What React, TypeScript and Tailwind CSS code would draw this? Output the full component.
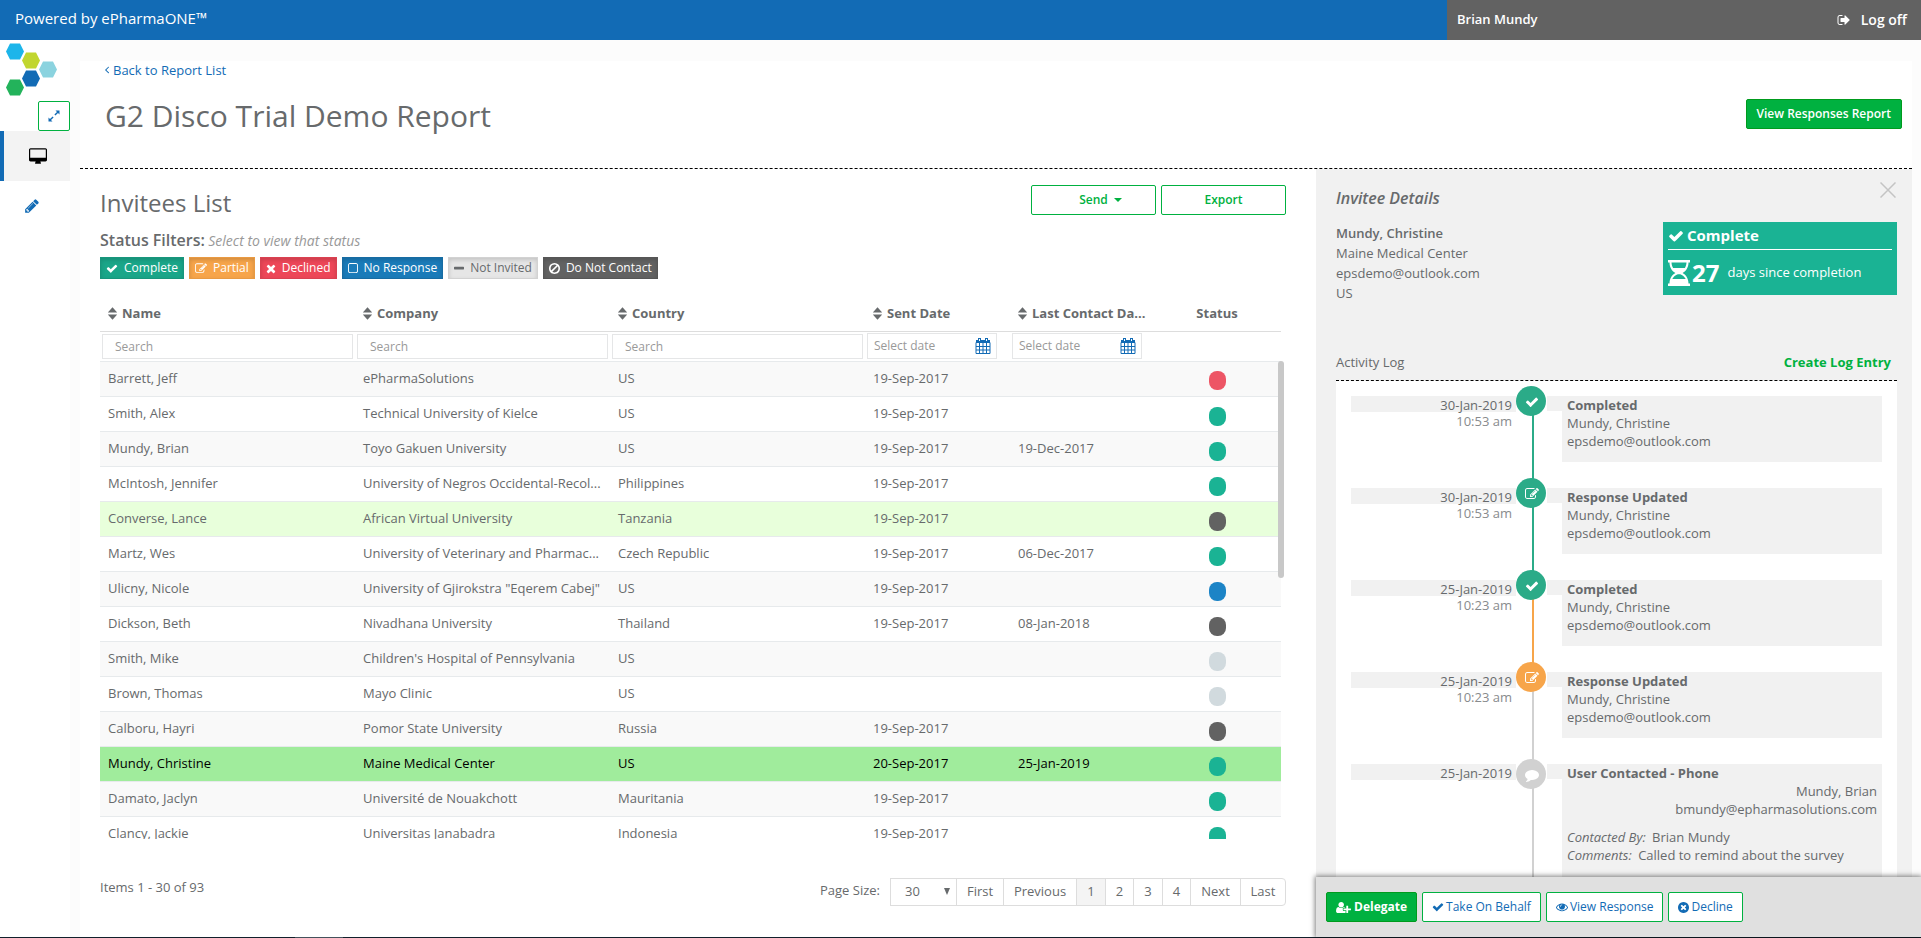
import React from "react";

const ICONS = {
  check: { box: "0 0 1792 1792", d: "M1671 566q0 40-28 68l-724 724-136 136q-28 28-68 28t-68-28l-136-136-362-362q-28-28-28-68t28-68l136-136q28-28 68-28t68 28l294 295 656-657q28-28 68-28t68 28l136 136q28 28 28 68z" },
  times: { box: "192 0 1408 1792", d: "M1490 1322q0 40-28 68l-136 136q-28 28-68 28t-68-28l-294-294-294 294q-28 28-68 28t-68-28l-136-136q-28-28-28-68t28-68l294-294-294-294q-28-28-28-68t28-68l136-136q28-28 68-28t68 28l294 294 294-294q28-28 68-28t68 28l136 136q28 28 28 68t-28 68l-294 294 294 294q28 28 28 68z" },
  minus: { box: "192 0 1408 1792", d: "M1600 736v192q0 40-28 68t-68 28h-1216q-40 0-68-28t-28-68v-192q0-40 28-68t68-28h1216q40 0 68 28t28 68z" },
  square: { box: "192 0 1408 1792", d: "M1312 256h-832q-66 0-113 47t-47 113v832q0 66 47 113t113 47h832q66 0 113-47t47-113v-832q0-66-47-113t-113-47zm288 160v832q0 119-84.5 203.5t-203.5 84.5h-832q-119 0-203.5-84.5t-84.5-203.5v-832q0-119 84.5-203.5t203.5-84.5h832q119 0 203.5 84.5t84.5 203.5z" },
  ban: { box: "128 0 1536 1792", d: "M1440 893q0-161-87-295l-754 753q137 89 297 89 111 0 211.5-43.5t173.5-116.5 116-174.5 43-212.5zm-999 299l755-754q-135-91-300-91-148 0-273 73t-198 199-73 274q0 162 89 299zm1223-299q0 157-61 300t-163.5 246-245 164-298.5 61-298.5-61-245-164-163.5-246-61-300 61-299.5 163.5-245.5 245-164 298.5-61 298.5 61 245 164 163.5 245.5 61 299.5z" },
  edit: { box: "0 0 1792 1792", d: "M888 1184l116-116-152-152-116 116v56h96v96h56zm440-720q-16-16-33 1l-350 350q-17 17-1 33t33-1l350-350q17-17 1-33zm80 594v190q0 119-84.5 203.5t-203.5 84.5h-832q-119 0-203.5-84.5t-84.5-203.5v-832q0-119 84.5-203.5t203.5-84.5h832q63 0 117 25 15 7 18 23 3 17-9 29l-49 49q-14 14-32 8-23-6-45-6h-832q-66 0-113 47t-47 113v832q0 66 47 113t113 47h832q66 0 113-47t47-113v-126q0-13 9-22l64-64q15-15 35-7t20 29zm-96-738l288 288-672 672h-288v-288zm444 132l-92 92-288-288 92-92q28-28 68-28t68 28l152 152q28 28 28 68t-28 68z" },
  desktop: { box: "0 -64 1920 1792", d: "M1792 992v-832q0-13-9.500-22.500t-22.500-9.500h-1600q-13 0-22.500 9.500t-9.500 22.500v832q0 13 9.500 22.500t22.500 9.500h1600q13 0 22.500-9.500t9.500-22.500zm128-832v1088q0 66-47 113t-113 47h-544q0 37 16 77.500t32 71 16 43.500q0 26-19 45t-45 19h-512q-26 0-45-19t-19-45q0-14 16-44t32-70 16-78h-544q-66 0-113-47t-47-113v-1088q0-66 47-113t113-47h1600q66 0 113 47t47 113z" },
  pencil: { box: "0 0 1792 1792", d: "M491 1536l91-91-235-235-91 91v107h128v128h107zm523-928q0-22-22-22-10 0-17 7l-542 542q-7 7-7 17 0 22 22 22 10 0 17-7l542-542q7-7 7-17zm-54-192l416 416-832 832h-416v-416zm683 96q0 53-37 90l-166 166-416-416 166-165q36-38 90-38 53 0 91 38l235 234q37 39 37 91z" },
  comment: { box: "0 0 1792 1792", d: "M1792 896q0 174-120 321.500t-326 233-450 85.500q-70 0-145-8-198 175-460 242-49 14-114 22-17 2-30.500-9t-17.500-29v-1q-3-4-.5-12t2-10 4.500-9.500l6-9 7-8.500 8-9q7-8 31-34.500t34.500-38 31-39.500 32.500-51 27-59 26-76q-157-89-247.500-220t-90.500-281q0-130 71-248.500t191-204.500 286-136.500 348-50.500q244 0 450 85.500t326 233 120 321.500z" },
  signOut: { box: "0 0 1792 1792", d: "M704 1440q0 4 1 20t.5 26.500-3 23.500-10 19.500-20.500 6.500h-320q-119 0-203.500-84.500t-84.500-203.500v-704q0-119 84.500-203.500t203.500-84.500h320q13 0 22.500 9.500t9.500 22.500q0 4 1 20t.5 26.500-3 23.500-10 19.500-20.500 6.500h-320q-66 0-113 47t-47 113v704q0 66 47 113t113 47h312l11.500 1 11.500 3 8 5.500 7 9 2 13.500zm928-544q0 26-19 45l-544 544q-19 19-45 19t-45-19-19-45v-288h-448q-26 0-45-19t-19-45v-384q0-26 19-45t45-19h448v-288q0-26 19-45t45-19 45 19l544 544q19 19 19 45z" },
  eye: { box: "0 0 1792 1792", d: "M1664 960q-152-236-381-353 61 104 61 225 0 185-131.500 316.500t-316.500 131.500-316.500-131.500-131.500-316.500q0-121 61-225-229 117-381 353 133 205 333.500 326.500t434.500 121.500 434.500-121.500 333.500-326.500zm-720-384q0-20-14-34t-34-14q-125 0-214.500 89.500t-89.500 214.500q0 20 14 34t34 14 34-14 14-34q0-86 61-147t147-61q20 0 34-14t14-34zm848 384q0 34-20 69-140 230-376.500 368.500t-499.500 138.500-499.500-139-376.500-368q-20-35-20-69t20-69q140-229 376.500-368t499.500-139 499.500 139 376.500 368q20 35 20 69z" },
  timesCircle: { box: "128 0 1536 1792", d: "M1277 1122q0-26-19-45l-181-181 181-181q19-19 19-45 0-27-19-46l-90-90q-19-19-46-19-26 0-45 19l-181 181-181-181q-19-19-45-19-27 0-46 19l-90 90q-19 19-19 46 0 26 19 45l181 181-181 181q-19 19-19 45 0 27 19 46l90 90q19 19 46 19 26 0 45-19l181-181 181 181q19 19 45 19 27 0 46-19l90-90q19-19 19-46zm387-226q0 209-103 385.500t-279.500 279.500-385.500 103-385.500-103-279.500-279.500-103-385.500 103-385.500 279.500-279.500 385.500-103 385.500 103 279.500 279.500 103 385.500z" },
  userPlus: { box: "0 0 2048 1792", d: "M704 896q-159 0-271.500-112.500t-112.500-271.500 112.500-271.500 271.500-112.500 271.500 112.500 112.500 271.500-112.500 271.500-271.500 112.500zm960 128h352q13 0 22.500 9.500t9.500 22.500v192q0 13-9.500 22.500t-22.500 9.500h-352v352q0 13-9.500 22.500t-22.500 9.500h-192q-13 0-22.500-9.500t-9.500-22.500v-352h-352q-13 0-22.500-9.500t-9.500-22.500v-192q0-13 9.500-22.500t22.500-9.500h352v-352q0-13 9.500-22.500t22.500-9.500h192q13 0 22.500 9.500t9.500 22.500v352zm-736 224q0 52 38 90t90 38h256v238q-68 50-171 50h-874q-121 0-194-69t-73-190q0-53 3.500-103.500t14-109 26.500-108.500 43-97.500 62-81 85.500-53.500 111.500-20q19 0 39 17 79 61 154.500 91.500t164.500 30.500 164.500-30.500 154.500-91.500q20-17 39-17 132 0 217 96h-223q-52 0-90 38t-38 90v192z" },
  angleLeft: { box: "500 300 560 1200", d: "M1011 480q0 13-10 23l-393 393 393 393q10 10 10 23t-10 23l-50 50q-10 10-23 10t-23-10l-466-466q-10-10-10-23t10-23l466-466q10-10 23-10t23 10l50 50q10 10 10 23z" },
  expand: { box: "0 0 12 12", d: "M7.500 0.500H11.500V4.500L10 3L7.400 5.600L6.400 4.600L9 2ZM4.500 11.500H0.500V7.500L2 9L4.600 6.400L5.600 7.400L3 10Z" },
  sort: { box: "0 0 10 14", d: "M5 0L10 5.500V6H0V5.500ZM5 14L0 8.500V8H10V8.500Z" },
  hourglass: { box: "0 0 22 26", d: "M0 0H22V2.500H20.500C20.500 8 17.500 11.300 14.600 13C17.500 14.700 20.500 18 20.500 23.500H22V26H0V23.500H1.500C1.500 18 4.500 14.700 7.400 13C4.500 11.300 1.500 8 1.500 2.500H0ZM3.500 2.500C3.600 4.700 4.200 6.500 5.100 8H16.900C17.800 6.500 18.400 4.700 18.500 2.500ZM12.200 14.200H9.800C7.600 15 5.400 16.600 4.300 19H17.700C16.600 16.600 14.400 15 12.200 14.200Z" },
};

type IconName = keyof typeof ICONS;

function Icon({ name, className }: { name: IconName; className: string }) {
  return (
    <svg viewBox={ICONS[name].box} className={`shrink-0 ${className}`} fill="currentColor" fillRule="evenodd" aria-hidden="true">
      <path d={ICONS[name].d} />
    </svg>
  );
}

function CalendarIcon() {
  return (
    <svg viewBox="0 0 16 16" className="h-4 w-4 shrink-0 text-[#126bb5]" aria-hidden="true">
      <path fill="currentColor" d="M1 2H15V5H1ZM3 0H6V3H3ZM10 0H13V3H10Z" />
      <path stroke="currentColor" fill="none" d="M1 4.500H15V15.500H1ZM1 8.500H15M1 12H15M4.500 5V15M8 5V15M11.500 5V15" />
      <path stroke="#ffffff" fill="none" d="M4.500 1V3M11.500 1V3" />
    </svg>
  );
}

const hex = (cx: number, cy: number) =>
  `${cx - 9},${cy} ${cx - 5},${cy - 8} ${cx + 5},${cy - 8} ${cx + 9},${cy} ${cx + 5},${cy + 8} ${cx - 5},${cy + 8}`;

function Logo() {
  return (
    <svg viewBox="0 0 52 54" className="h-[54px] w-[52px]" role="img" aria-label="ePharmaONE">
      <polygon points={hex(9, 8.5)} fill="#1cb5ea" />
      <polygon points={hex(25, 17.5)} fill="#c1d62f" />
      <polygon points={hex(42, 26.5)} fill="#8bd3df" />
      <polygon points={hex(25, 35.5)} fill="#126bb5" />
      <polygon points={hex(9, 44.5)} fill="#23b35b" />
    </svg>
  );
}

const FILTERS: { label: string; icon: IconName; width: string; tone: string }[] = [
  { label: "Complete", icon: "check", width: "w-3", tone: "bg-[#1aa689] border-[#18967c] text-white" },
  { label: "Partial", icon: "edit", width: "w-3", tone: "bg-[#f7a54a] border-[#e99a42] text-white" },
  { label: "Declined", icon: "times", width: "w-2.5", tone: "bg-[#ed4758] border-[#da4151] text-white" },
  { label: "No Response", icon: "square", width: "w-2.5", tone: "bg-[#1a7bb9] border-[#176ca3] text-white" },
  { label: "Not Invited", icon: "minus", width: "w-2.5", tone: "bg-[#e6e6e6] border-[#d2d2d2] text-[#676a6c]" },
  { label: "Do Not Contact", icon: "ban", width: "w-[11px]", tone: "bg-[#626262] border-[#565656] text-white" },
];

const TEAL = "bg-[#1ab394]";
const DARK = "bg-[#626262]";
const PALE = "bg-[#d1dade]";

const ROWS = [
  ["Barrett, Jeff", "ePharmaSolutions", "US", "19-Sep-2017", "", "bg-[#ed5565]"],
  ["Smith, Alex", "Technical University of Kielce", "US", "19-Sep-2017", "", TEAL],
  ["Mundy, Brian", "Toyo Gakuen University", "US", "19-Sep-2017", "19-Dec-2017", TEAL],
  ["McIntosh, Jennifer", "University of Negros Occidental-Recol...", "Philippines", "19-Sep-2017", "", TEAL],
  ["Converse, Lance", "African Virtual University", "Tanzania", "19-Sep-2017", "", DARK],
  ["Martz, Wes", "University of Veterinary and Pharmac...", "Czech Republic", "19-Sep-2017", "06-Dec-2017", TEAL],
  ["Ulicny, Nicole", "University of Gjirokstra \"Eqerem Cabej\"", "US", "19-Sep-2017", "", "bg-[#1c84c6]"],
  ["Dickson, Beth", "Nivadhana University", "Thailand", "19-Sep-2017", "08-Jan-2018", DARK],
  ["Smith, Mike", "Children's Hospital of Pennsylvania", "US", "", "", PALE],
  ["Brown, Thomas", "Mayo Clinic", "US", "", "", PALE],
  ["Calboru, Hayri", "Pomor State University", "Russia", "19-Sep-2017", "", DARK],
  ["Mundy, Christine", "Maine Medical Center", "US", "20-Sep-2017", "25-Jan-2019", TEAL],
  ["Damato, Jaclyn", "Université de Nouakchott", "Mauritania", "19-Sep-2017", "", TEAL],
  ["Clancy, Jackie", "Universitas Janabadra", "Indonesia", "19-Sep-2017", "", TEAL],
];

function rowTone(i: number) {
  if (i === 4) return "bg-[#e8ffdb]";
  if (i === 11) return "bg-[#a0ec9c] text-black";
  return i % 2 === 0 ? "bg-[#f9f9f9]" : "bg-white";
}

const HEADS = ["Name", "Company", "Country", "Sent Date", "Last Contact Da..."];

const OUTLINE = "border border-[#00b140] bg-white rounded-xs";

function Columns() {
  return (
    <colgroup>
      <col />
      <col />
      <col />
      <col className="w-[145px]" />
      <col className="w-[143px]" />
      <col className="w-[128px]" />
    </colgroup>
  );
}

function InviteesTable() {
  return (
    <div className="mr-[5px]">
      <table className="w-full table-fixed border-collapse text-left">
        <Columns />
        <thead>
          <tr className="h-[35px] border-b border-[#dddddd]">
            {HEADS.map((h) => (
              <th key={h} scope="col" className="px-2 text-[13px] font-bold whitespace-nowrap">
                <button className="inline-flex items-center gap-[5px] align-middle">
                  <Icon name="sort" className="h-[13px] w-[9px]" />
                  <span>{h}</span>
                </button>
              </th>
            ))}
            <th scope="col" className="text-center text-[13px] font-bold">Status</th>
          </tr>
          <tr className="h-[30px] border-b border-[#e7eaec]">
            {HEADS.map((h, i) =>
              i < 3 ? (
                <td key={h} className="px-[2px]">
                  <input aria-label={`Search ${h}`} placeholder="Search" className="block h-[25px] w-full border border-[#e5e6e7] px-3 text-xs placeholder:text-[#999999]" />
                </td>
              ) : (
                <td key={h} className="px-[2px]">
                  <label className="flex h-[26px] w-[130px] items-center border border-[#e5e6e7] pr-[5px] pl-1.5">
                    <input aria-label={h} placeholder="Select date" className="min-w-0 flex-1 text-xs placeholder:text-[#999999]" />
                    <CalendarIcon />
                  </label>
                </td>
              ),
            )}
            <td />
          </tr>
        </thead>
      </table>
      <div className="h-[477px] overflow-hidden">
        <table className="w-full table-fixed border-collapse text-left text-[13px]">
          <Columns />
          <tbody>
            {ROWS.map((r, i) => (
              <tr key={r[0]} className={`h-[35px] border-b border-[#e7eaec] ${rowTone(i)}`}>
                {r.slice(0, 5).map((c, j) => (
                  <td key={j} className="pl-2 whitespace-nowrap">{c}</td>
                ))}
                <td>
                  <span className={`mx-auto mt-1 block h-[19px] w-[17px] rounded-lg ${r[5]}`} />
                </td>
              </tr>
            ))}
          </tbody>
        </table>
      </div>
    </div>
  );
}

const PAGES = [
  ["First", "w-12"],
  ["Previous", "w-[74px]"],
  ["1", "w-[30px] bg-[#f4f4f4]"],
  ["2", "w-[29px]"],
  ["3", "w-[30px]"],
  ["4", "w-[29px]"],
  ["Next", "w-[51px]"],
  ["Last", "w-[46px] rounded-r"],
];

type Entry = { date: string; time?: string; title: string; icon: IconName; dot: string; line: string };

const LOG: Entry[] = [
  { date: "30-Jan-2019", time: "10:53 am", title: "Completed", icon: "check", dot: "bg-[#2bab88]", line: "bg-[#2bab88]" },
  { date: "30-Jan-2019", time: "10:53 am", title: "Response Updated", icon: "edit", dot: "bg-[#2bab88]", line: "bg-[#2bab88]" },
  { date: "25-Jan-2019", time: "10:23 am", title: "Completed", icon: "check", dot: "bg-[#2bab88]", line: "bg-[#f7a54a]" },
  { date: "25-Jan-2019", time: "10:23 am", title: "Response Updated", icon: "edit", dot: "bg-[#f7a54a]", line: "bg-[#d1d1d1]" },
  { date: "25-Jan-2019", title: "User Contacted - Phone", icon: "comment", dot: "bg-[#d1d1d1]", line: "bg-[#d1d1d1]" },
];

function LogEntry({ entry }: { entry: Entry }) {
  const last = !entry.time;
  return (
    <li className="flex">
      <div className="flex-1">
        <div className="h-4 bg-[#f1f1f1] pr-1 text-right leading-[18px]">{entry.date}</div>
        {entry.time && <div className="pr-1 text-right leading-[18px] text-[#888b8d]">{entry.time}</div>}
      </div>
      <div className="relative flex w-[30px] flex-col items-center">
        <div className={`ml-1 w-[2px] flex-1 ${entry.line}`} />
        <div className={`absolute left-0 flex h-[30px] w-[30px] items-center justify-center rounded-full text-white ${last ? "-top-[5px]" : "-top-[10px]"} ${entry.dot}`}>
          <Icon name={entry.icon} className="mt-0.5 ml-0.5 h-3.5 w-3.5" />
        </div>
      </div>
      <div className="ml-px h-[15px] w-[15px] bg-[#f1f1f1]" />
      <div className={`w-[320px] bg-[#f1f1f1] px-[5px] leading-[18px] ${last ? "h-[140px]" : "mb-[26px] h-[66px]"}`}>
        <div className="font-bold">{entry.title}</div>
        {last ? (
          <>
            <div className="text-right">Mundy, Brian</div>
            <div className="text-right">bmundy@epharmasolutions.com</div>
            <div className="mt-2.5"><em className="mr-[3px]">Contacted By:</em> Brian Mundy</div>
            <div><em className="mr-[3px]">Comments:</em> Called to remind about the survey</div>
          </>
        ) : (
          <>
            <div>Mundy, Christine</div>
            <div>epsdemo@outlook.com</div>
          </>
        )}
      </div>
    </li>
  );
}

function DetailsPanel() {
  return (
    <aside className="flex min-h-0 w-[596px] shrink-0 flex-col bg-[#f1f1f1] text-[13px]">
      <div className="flex items-start justify-between pt-[13px] pr-4 pl-5">
        <h2 className="pt-1 text-base leading-6 font-semibold italic">Invitee Details</h2>
        <button aria-label="Close details" className="text-[#c4c4c4]">
          <svg viewBox="0 0 16 16" className="h-4 w-4" fill="none" stroke="currentColor" strokeWidth="1.5"><path d="M0.500 0.500L15.500 15.500M15.500 0.500L0.500 15.500" /></svg>
        </button>
      </div>
      <div className="mt-3 flex h-[130px] items-start justify-between pr-[15px] pl-5">
        <div className="pt-px leading-5">
          <div className="font-semibold">Mundy, Christine</div>
          <div>Maine Medical Center</div>
          <div>epsdemo@outlook.com</div>
          <div>US</div>
        </div>
        <div className="h-[73px] w-[234px] bg-[#1ab394] px-[5px] text-white">
          <div className="flex h-7 items-center gap-[3px] border-b border-white text-[15px] font-bold">
            <Icon name="check" className="h-4 w-4" />
            Complete
          </div>
          <div className="flex h-[45px] items-center">
            <Icon name="hourglass" className="h-[26px] w-[22px]" />
            <span className="ml-0.5 text-2xl font-bold">27</span>
            <span className="ml-2">days since completion</span>
          </div>
        </div>
      </div>
      <div className="ml-5 mr-[15px] flex items-center justify-between border-b border-dashed border-black pr-1.5 pb-2 leading-5">
        <h3>Activity Log</h3>
        <a href="#log" className="font-bold text-[#00b140]">Create Log Entry</a>
      </div>
      <ul className="ml-5 mr-[15px] min-h-0 flex-1 overflow-hidden bg-white px-[15px] pt-[15px]">
        {LOG.map((e, i) => (
          <LogEntry key={i} entry={e} />
        ))}
      </ul>
      <div className="relative -mr-[9px] flex h-[60px] shrink-0 items-center gap-[5px] bg-[#e0e0e0] pl-2.5 text-xs text-[#126bb5] shadow-[0_0_5px_1px_rgba(0,0,0,0.5)]">
        <button className="flex h-[30px] items-center gap-[3px] rounded-xs border border-[#009b1d] bg-[#00b140] px-[9px] font-bold text-white">
          <Icon name="userPlus" className="h-[13px] w-[15px]" />Delegate
        </button>
        <button className={`flex h-[30px] items-center gap-0.5 px-[9px] ${OUTLINE}`}><Icon name="check" className="h-3 w-3" />Take On Behalf</button>
        <button className={`flex h-[30px] items-center gap-0.5 px-[9px] ${OUTLINE}`}><Icon name="eye" className="h-3 w-3" />View Response</button>
        <button className={`flex h-[30px] items-center gap-0.5 px-[9px] ${OUTLINE}`}><Icon name="timesCircle" className="h-[13px] w-[11px]" />Decline</button>
      </div>
    </aside>
  );
}

export default function App() {
  return (
    <div className="flex h-screen flex-col overflow-hidden bg-white font-['Open_Sans','Noto_Sans',sans-serif] text-[13px] text-[#676a6c]">
      <header className="flex h-10 shrink-0 bg-[#126bb5] text-white">
        <div className="flex-1 pt-[7px] pl-[15px] text-[15px] leading-[22px]">Powered by ePharmaONE™</div>
        <div className="flex w-[474px] items-center justify-between bg-[#626262] pr-3.5 pl-2.5 text-[13px] font-semibold">
          <span>Brian Mundy</span>
          <a href="#logoff" className="flex items-center gap-2.5 text-sm"><Icon name="signOut" className="h-3.5 w-3.5" />Log off</a>
        </div>
      </header>
      <div className="flex min-h-0 flex-1">
        <nav className="flex w-[70px] shrink-0 flex-col pt-[3px]">
          <div className="pl-1.5"><Logo /></div>
          <button aria-label="Expand menu" className={`mt-1 flex h-[30px] w-8 items-center justify-center self-end text-[#126bb5] ${OUTLINE}`}>
            <Icon name="expand" className="h-3 w-3" />
          </button>
          <a href="#reports" aria-label="Reports" className="flex h-[50px] items-center justify-center border-l-4 border-[#126bb5] bg-[#f3f3f3] pl-0.5 text-black">
            <Icon name="desktop" className="h-[18px] w-[18px]" />
          </a>
          <a href="#edit" aria-label="Edit" className="flex h-[50px] items-center justify-center pr-1.5 text-[#126bb5]">
            <Icon name="pencil" className="h-4 w-4" />
          </a>
        </nav>
        <main className="flex min-w-0 flex-1 flex-col bg-[#fcfcfc] pt-[21px] pr-[9px] pl-2.5">
          <div className="flex h-[108px] shrink-0 items-start justify-between border-b border-dashed border-black bg-white pr-2.5 pl-[25px]">
            <div>
              <a href="#list" className="flex items-center gap-[3px] leading-[18px] text-[#126bb5]"><Icon name="angleLeft" className="h-2 w-[5px]" />Back to Report List</a>
              <h1 className="mt-[17px] text-3xl leading-10">G2 Disco Trial Demo Report</h1>
            </div>
            <button className="mt-[38px] h-[30px] rounded-xs border border-[#009b1d] bg-[#00b140] px-2.5 text-xs font-semibold text-white">View Responses Report</button>
          </div>
          <div className="flex min-h-0 flex-1">
            <section className="min-w-0 flex-1 bg-white pr-[30px] pl-5">
              <div className="flex justify-between pt-4">
                <h2 className="pt-0.5 text-2xl leading-8">Invitees List</h2>
                <div className="flex gap-[5px] text-xs font-semibold text-[#00b140]">
                  <button className={`flex h-[30px] w-[125px] items-center justify-center gap-1.5 pl-3.5 ${OUTLINE}`}>
                    Send<svg viewBox="0 0 8 4" className="h-1 w-2" fill="currentColor"><path d="M0 0H8L4 4Z" /></svg>
                  </button>
                  <button className={`h-[30px] w-[125px] ${OUTLINE}`}>Export</button>
                </div>
              </div>
              <p className="mt-[9px] leading-6 text-[#999999]"><span className="text-base font-semibold text-[#676a6c]">Status Filters:</span> <em className="text-sm">Select to view that status</em></p>
              <div className="mt-1 mb-[17px] flex gap-[5px]">
                {FILTERS.map((f) => (
                  <button key={f.label} className={`flex h-[22px] items-center gap-1.5 border px-[5px] text-xs shadow-[inset_0_2px_4px_rgba(0,0,0,0.15)] ${f.tone}`}>
                    <Icon name={f.icon} className={`h-[13px] ${f.width}`} />{f.label}
                  </button>
                ))}
              </div>
              <div className="relative">
                <InviteesTable />
                <div className="absolute top-[65px] right-0.5 h-[217px] w-1.5 rounded bg-[#c8c8c8]" />
              </div>
              <div className="mt-[39px] flex justify-between">
                <span className="leading-[18px]">Items 1 - 30 of 93</span>
                <div className="flex items-start">
                  <label htmlFor="page-size" className="mr-2.5 leading-6">Page Size:</label>
                  <div className="flex -space-x-px">
                    <div className="relative">
                      <select id="page-size" className="h-7 w-[67px] appearance-none border border-[#dddddd] bg-white pl-3.5"><option>30</option></select>
                      <svg viewBox="0 0 6 7" className="pointer-events-none absolute top-2.5 right-[7px] h-[7px] w-1.5" fill="currentColor" aria-hidden="true"><path d="M0 0H6L3 7Z" /></svg>
                    </div>
                    {PAGES.map(([label, cls]) => (
                      <button key={label} className={`h-7 border border-[#dddddd] ${cls}`}>{label}</button>
                    ))}
                  </div>
                </div>
              </div>
            </section>
            <DetailsPanel />
          </div>
        </main>
      </div>
      <div className="flex h-px shrink-0 bg-[#12202b]"><div className="ml-[295px] w-12 bg-[#45525c]" /></div>
    </div>
  );
}
